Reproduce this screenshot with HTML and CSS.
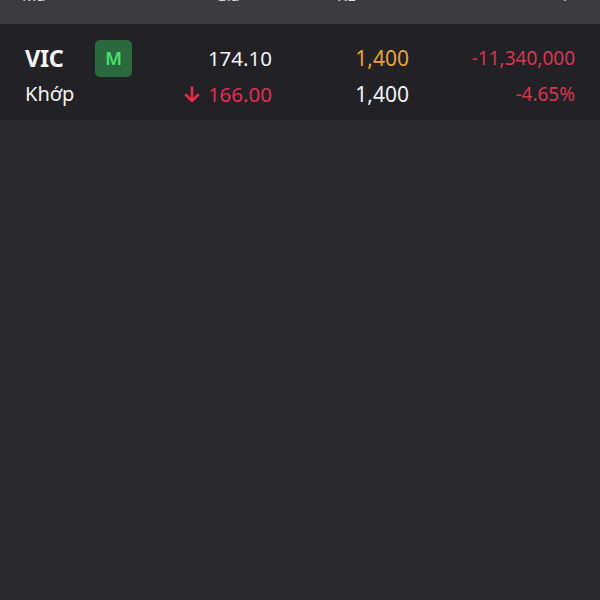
FILE: index.html
```html
<!DOCTYPE html>
<html lang="vi">
<head>
<meta charset="utf-8">
<link rel="stylesheet" href="styles.css">
</head>
<body>
<div class="screen">
  <div class="thead">
    <div class="thead-row">
      <span>Mã</span>
      <span>Giá</span>
      <span>KL</span>
      <span class="right">+/-</span>
    </div>
  </div>
  <div class="row">
    <div class="sym">VIC</div>
    <div class="badge">M</div>
    <div class="price">174.10</div>
    <div class="vol orange">1,400</div>
    <div class="chg">-11,340,000</div>
    <div class="type">Khớp</div>
    <div class="price red">
      <svg class="arrow" width="16" height="17" viewBox="0 0 16 17"><path d="M8 1.5V15M2 9l6 6 6-6" fill="none" stroke="#e8294f" stroke-width="2.6" stroke-linecap="round" stroke-linejoin="round"/></svg>166.00
    </div>
    <div class="vol">1,400</div>
    <div class="chg">-4.65%</div>
  </div>
</div>
</body>
</html>
```
FILE: styles.css
```css
html, body {
  margin: 0;
  padding: 0;
  background: #29282d;
}
.screen {
  width: 600px;
  height: 600px;
  background: #29282d;
  font-family: "Noto Sans", "Open Sans", sans-serif;
  color: #f2f2f2;
}
.thead {
  height: 24px;
  background: #3c3c40;
  overflow: hidden;
}
.thead-row {
  display: grid;
  grid-template-columns: 193px 122px 150px 1fr;
  padding: 0 25px 0 22px;
  margin-top: -13px;
  font-size: 16px;
  line-height: 16px;
  color: #dcdcdc;
}
.thead-row .right {
  text-align: right;
}
.row {
  height: 96px;
  box-sizing: border-box;
  background: #222226;
  padding: 16px 25px 8px 25px;
  display: grid;
  grid-template-columns: 70px 37px 140px 137px 166px;
  grid-template-rows: 36px 36px;
  align-items: start;
  line-height: 36px;
}
.sym {
  font-size: 23.5px;
  font-weight: 700;
  color: #f5f5f5;
  letter-spacing: -0.3px;
}
.badge {
  width: 37px;
  height: 37px;
  border-radius: 5px;
  background: #2b6a3f;
  color: #47e06c;
  font-size: 18px;
  font-weight: 600;
  line-height: 37px;
  text-align: center;
}
.price {
  font-size: 20.5px;
  text-align: right;
  display: flex;
  justify-content: flex-end;
  align-items: center;
  gap: 8px;
}
.price.red {
  color: #e8294f;
}
.arrow {
  display: block;
  margin-top: 1px;
}
.vol {
  font-size: 21px;
  text-align: right;
}
.vol.orange {
  color: #e9a23b;
}
.chg {
  font-size: 19px;
  text-align: right;
  color: #d8354f;
}
.type {
  font-size: 20px;
  grid-column: 1 / 3;
}
```
